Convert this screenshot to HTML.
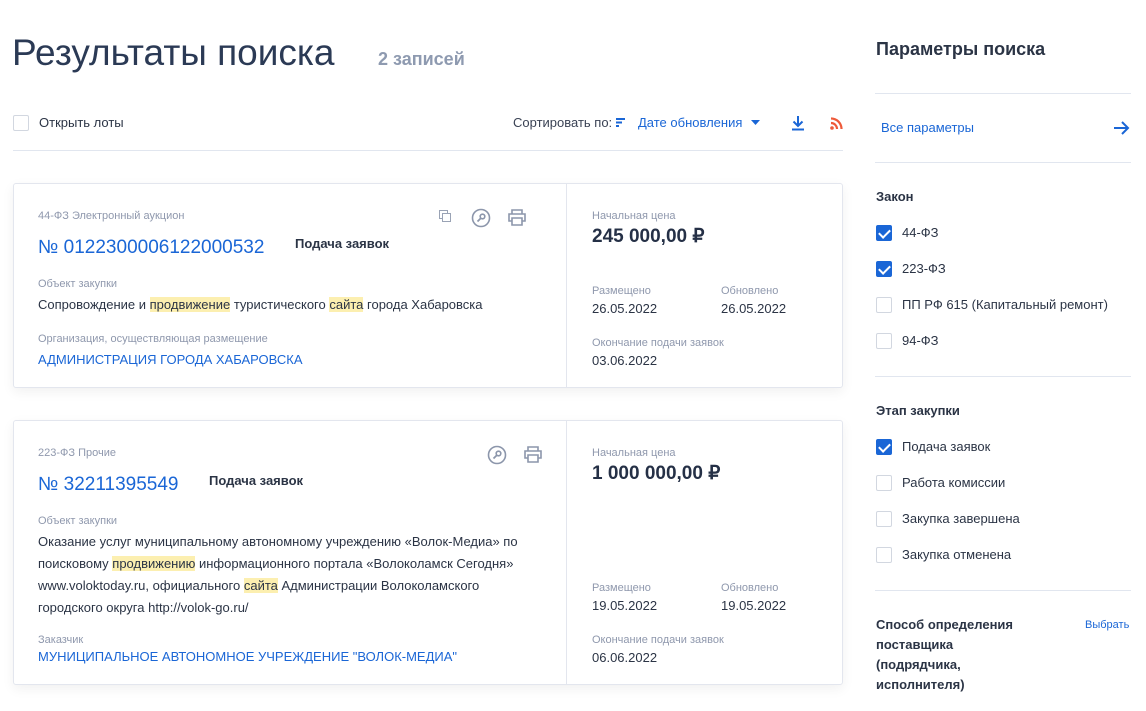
<!DOCTYPE html>
<html><head><meta charset="utf-8"><style>
*{margin:0;padding:0;box-sizing:border-box}
body{width:1146px;height:711px;background:#fff;font-family:"Liberation Sans",sans-serif;color:#2b3445;position:relative;overflow:hidden}
.a{position:absolute;white-space:nowrap;line-height:20px}
.g{color:#8f98ad;font-size:11px}
.b{color:#1a66d6}
.s13{font-size:13px}
.hl{background:#fcefb0}
.card{position:absolute;left:13px;width:830px;border:1px solid #e3e6ee;border-radius:3px;box-shadow:0 4px 12px rgba(0,0,0,.06);background:#fff}
.dv{position:absolute;left:552px;top:0;bottom:0;border-left:1px solid #e3e6ee}
.hr{position:absolute;height:1px;background:#e1e6ef}
.cb{position:absolute;width:16px;height:16px;border:1px solid #d2d7e0;border-radius:2px;background:#fff}
.cb.on{background:#1a66d6;border-color:#1a66d6}
.cb.on:after{content:"";position:absolute;left:4px;top:1px;width:5px;height:9px;border:solid #fff;border-width:0 2.2px 2.2px 0;transform:rotate(45deg)}
</style></head><body>

<div class="a" style="left:12px;top:31px;font-size:37px;line-height:44px;color:#2b3a55">Результаты поиска</div>
<div class="a" style="left:378px;top:49px;font-size:18px;font-weight:bold;color:#8e9ab0">2 записей</div>

<div class="cb" style="left:13px;top:115px"></div>
<div class="a s13" style="left:39px;top:113px">Открыть лоты</div>
<div class="a s13" style="left:513px;top:113px;color:#3a4254">Сортировать по:</div>
<svg style="position:absolute;left:616px;top:118px" width="10" height="9"><rect x="0" y="0" width="9" height="2" fill="#1a66d6"/><rect x="0" y="3.5" width="6" height="2" fill="#1a66d6"/><rect x="0" y="7" width="3" height="2" fill="#1a66d6"/></svg>
<div class="a s13 b" style="left:638px;top:113px">Дате обновления</div>
<svg style="position:absolute;left:751px;top:120px" width="9" height="5"><path d="M0 0h9L4.5 5z" fill="#1a66d6"/></svg>
<svg style="position:absolute;left:791px;top:115px" width="14" height="16"><path d="M7 1v10M2.5 6.5 7 11l4.5-4.5M1 14.5h12" stroke="#1a66d6" stroke-width="2" fill="none"/></svg>
<svg style="position:absolute;left:830px;top:117px" width="13" height="13"><circle cx="2" cy="11" r="1.8" fill="#ee5a3a"/><path d="M1 6a6 6 0 0 1 6 6M1 1.5a10.5 10.5 0 0 1 10.5 10.5" stroke="#ee5a3a" stroke-width="2.2" fill="none"/></svg>
<div class="hr" style="left:13px;top:150px;width:830px"></div>

<div class="card" style="top:183px;height:205px">
 <div class="dv"></div>
 <div class="a g" style="left:24px;top:22px">44-ФЗ Электронный аукцион</div>
 <svg style="position:absolute;left:425px;top:26px" width="13" height="13"><rect x="0.5" y="0.5" width="8" height="8" fill="none" stroke="#9aa3b5"/><rect x="3.5" y="3.5" width="8" height="8" fill="#fff" stroke="#9aa3b5"/></svg>
 <svg style="position:absolute;left:457px;top:24px" width="20" height="20"><circle cx="10" cy="10" r="8.5" fill="none" stroke="#8c96ab" stroke-width="1.6"/><circle cx="11.5" cy="8.5" r="2.3" fill="none" stroke="#8c96ab" stroke-width="1.6"/><path d="M10 10 6.5 13.5" stroke="#8c96ab" stroke-width="1.8"/></svg>
 <svg style="position:absolute;left:494px;top:25px" width="18" height="17"><path d="M4 5V1h10v4M4 12H1V5h16v7h-3M4 9h10v7H4z" fill="none" stroke="#8c96ab" stroke-width="1.6"/></svg>
 <div class="a b" style="left:24px;top:51px;font-size:19px;line-height:26px">№ 0122300006122000532</div>
 <div class="a s13" style="left:281px;top:50px;font-weight:bold">Подача заявок</div>
 <div class="a g" style="left:24px;top:90px">Объект закупки</div>
 <div class="a s13" style="left:24px;top:111px">Сопровождение и <span class="hl">продвижение</span> туристического <span class="hl">сайта</span> города Хабаровска</div>
 <div class="a g" style="left:24px;top:145px">Организация, осуществляющая размещение</div>
 <div class="a s13 b" style="left:24px;top:166px">АДМИНИСТРАЦИЯ ГОРОДА ХАБАРОВСКА</div>
 <div class="a g" style="left:578px;top:22px">Начальная цена</div>
 <div class="a" style="left:578px;top:40px;font-size:19px;line-height:26px;font-weight:bold;color:#253046">245 000,00 ₽</div>
 <div class="a g" style="left:578px;top:97px">Размещено</div>
 <div class="a s13" style="left:578px;top:115px">26.05.2022</div>
 <div class="a g" style="left:707px;top:97px">Обновлено</div>
 <div class="a s13" style="left:707px;top:115px">26.05.2022</div>
 <div class="a g" style="left:578px;top:149px">Окончание подачи заявок</div>
 <div class="a s13" style="left:578px;top:167px">03.06.2022</div>
</div>

<div class="card" style="top:420px;height:265px">
 <div class="dv"></div>
 <div class="a g" style="left:24px;top:22px">223-ФЗ Прочие</div>
 <svg style="position:absolute;left:473px;top:24px" width="20" height="20"><circle cx="10" cy="10" r="8.5" fill="none" stroke="#8c96ab" stroke-width="1.6"/><circle cx="11.5" cy="8.5" r="2.3" fill="none" stroke="#8c96ab" stroke-width="1.6"/><path d="M10 10 6.5 13.5" stroke="#8c96ab" stroke-width="1.8"/></svg>
 <svg style="position:absolute;left:510px;top:25px" width="18" height="17"><path d="M4 5V1h10v4M4 12H1V5h16v7h-3M4 9h10v7H4z" fill="none" stroke="#8c96ab" stroke-width="1.6"/></svg>
 <div class="a b" style="left:24px;top:51px;font-size:19px;line-height:26px">№ 32211395549</div>
 <div class="a s13" style="left:195px;top:50px;font-weight:bold">Подача заявок</div>
 <div class="a g" style="left:24px;top:90px">Объект закупки</div>
 <div class="a s13" style="left:24px;top:110px;line-height:22px">Оказание услуг муниципальному автономному учреждению «Волок-Медиа» по<br>поисковому <span class="hl">продвижению</span> информационного портала «Волоколамск Сегодня»<br>www.voloktoday.ru, официального <span class="hl">сайта</span> Администрации Волоколамского<br>городского округа http://volok-go.ru/</div>
 <div class="a g" style="left:24px;top:209px">Заказчик</div>
 <div class="a s13 b" style="left:24px;top:226px">МУНИЦИПАЛЬНОЕ АВТОНОМНОЕ УЧРЕЖДЕНИЕ "ВОЛОК-МЕДИА"</div>
 <div class="a g" style="left:578px;top:22px">Начальная цена</div>
 <div class="a" style="left:578px;top:40px;font-size:19px;line-height:26px;font-weight:bold;color:#253046">1 000 000,00 ₽</div>
 <div class="a g" style="left:578px;top:157px">Размещено</div>
 <div class="a s13" style="left:578px;top:175px">19.05.2022</div>
 <div class="a g" style="left:707px;top:157px">Обновлено</div>
 <div class="a s13" style="left:707px;top:175px">19.05.2022</div>
 <div class="a g" style="left:578px;top:209px">Окончание подачи заявок</div>
 <div class="a s13" style="left:578px;top:227px">06.06.2022</div>
</div>

<div class="a" style="left:876px;top:38px;font-size:18px;font-weight:bold;line-height:22px;color:#2b3445">Параметры поиска</div>
<div class="hr" style="left:875px;top:93px;width:256px"></div>
<div class="a s13 b" style="left:881px;top:118px">Все параметры</div>
<svg style="position:absolute;left:1113px;top:120px" width="17" height="16"><path d="M1 8h14M9 2l6 6-6 6" stroke="#1a66d6" stroke-width="2" fill="none"/></svg>
<div class="hr" style="left:875px;top:162px;width:256px"></div>
<div class="a s13" style="left:876px;top:187px;font-weight:bold">Закон</div>
<div class="cb on" style="left:876px;top:225px"></div><div class="a s13" style="left:902px;top:223px">44-ФЗ</div>
<div class="cb on" style="left:876px;top:261px"></div><div class="a s13" style="left:902px;top:259px">223-ФЗ</div>
<div class="cb" style="left:876px;top:297px"></div><div class="a s13" style="left:902px;top:295px">ПП РФ 615 (Капитальный ремонт)</div>
<div class="cb" style="left:876px;top:333px"></div><div class="a s13" style="left:902px;top:331px">94-ФЗ</div>
<div class="hr" style="left:875px;top:376px;width:256px"></div>
<div class="a s13" style="left:876px;top:401px;font-weight:bold">Этап закупки</div>
<div class="cb on" style="left:876px;top:439px"></div><div class="a s13" style="left:902px;top:437px">Подача заявок</div>
<div class="cb" style="left:876px;top:475px"></div><div class="a s13" style="left:902px;top:473px">Работа комиссии</div>
<div class="cb" style="left:876px;top:511px"></div><div class="a s13" style="left:902px;top:509px">Закупка завершена</div>
<div class="cb" style="left:876px;top:547px"></div><div class="a s13" style="left:902px;top:545px">Закупка отменена</div>
<div class="hr" style="left:875px;top:590px;width:256px"></div>
<div class="a s13" style="left:876px;top:615px;font-weight:bold">Способ определения<br>поставщика<br>(подрядчика,<br>исполнителя)</div>
<div class="a b" style="left:1085px;top:615px;font-size:11px">Выбрать</div>
</body></html>
